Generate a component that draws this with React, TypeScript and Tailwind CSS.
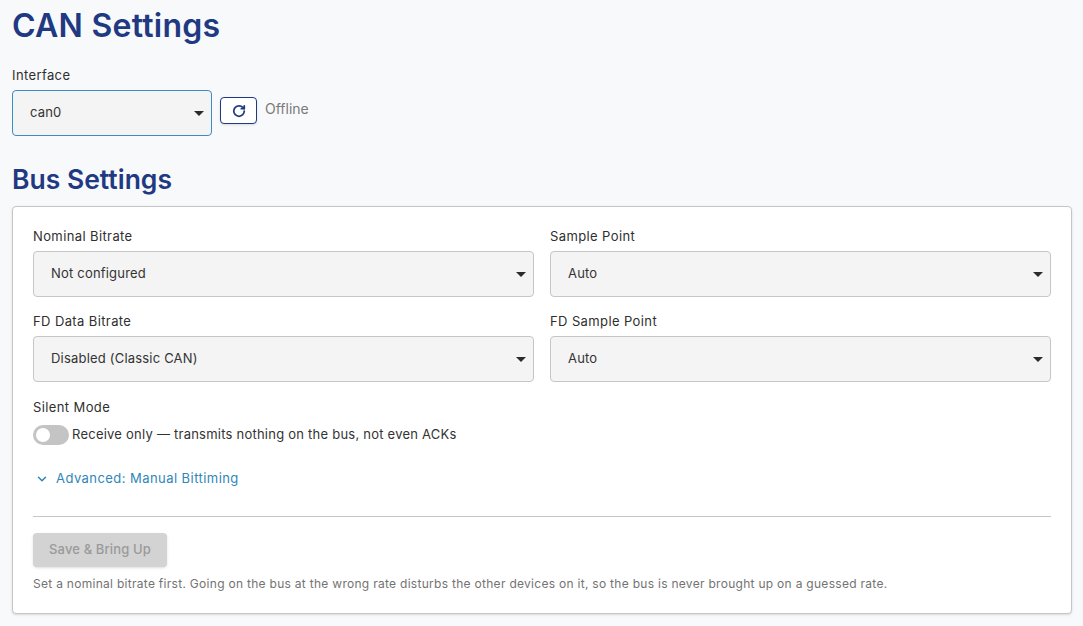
import { ChevronDown, RotateCw } from 'lucide-react';

const FONT = "font-['Inter','Liberation_Sans',sans-serif]";

function SelectBox({ value, className }: { value: string; className: string }) {
  return (
    <div className={`h-[46px] rounded-[4px] bg-[#f4f4f4] border flex items-center justify-between pl-[17px] pr-[7px] ${className}`}>
      <span className="text-[13px] tracking-[0.015em] text-[#333333]">{value}</span>
      <span className="w-0 h-0 border-x-[5px] border-x-transparent border-t-[5px] border-t-[#2b2b2b]" />
    </div>
  );
}

function Field({ label, value }: { label: string; value: string }) {
  return (
    <div className="flex flex-col">
      <label className="h-[16px] mb-[6px] flex items-center text-[13px] font-normal tracking-[0.03em] text-[#2f2f2f]">{label}</label>
      <SelectBox value={value} className="border-[#c6c6c6]" />
    </div>
  );
}

export default function App() {
  return (
    <div className={`${FONT} min-h-[626px] bg-[#f8f9fb] px-3 pt-[8px] overflow-hidden`}>
      <h1 className="h-[36px] leading-[36px] text-[32px] font-semibold tracking-[0.008em] text-[#1f3a82]">CAN Settings</h1>

      <label className="block mt-[23px] h-[16px] leading-[16px] text-[13px] font-normal tracking-[0.03em] text-[#2f2f2f]">Interface</label>
      <div className="mt-[7px] flex items-start gap-2">
        <SelectBox value="can0" className="w-[200px] border-[#3a8dc0]" />
        <button className="mt-[7px] w-[37px] h-[27px] rounded-[4px] border border-[#1f3a82] bg-white shadow-sm flex items-center justify-center">
          <RotateCw className="w-[14px] h-[14px] text-[#1f3a82]" strokeWidth={3} />
        </button>
        <span className="mt-[10px] text-[14px] leading-[18px] text-[#7a7a7a]">Offline</span>
      </div>

      <h2 className="mt-[27px] h-[32px] leading-[32px] text-[26.5px] font-semibold text-[#1f3a82]">Bus Settings</h2>

      <div className="mt-[11px] w-[1060px] h-[408px] bg-white border border-[#c6c6c6] rounded-[4px] shadow-sm px-5 pt-[22px]">
        <div className="grid grid-cols-[501px_501px] gap-x-4 gap-y-[17px]">
          <Field label="Nominal Bitrate" value="Not configured" />
          <Field label="Sample Point" value="Auto" />
          <Field label="FD Data Bitrate" value="Disabled (Classic CAN)" />
          <Field label="FD Sample Point" value="Auto" />
        </div>

        <div className="mt-[17px] h-[16px] leading-[16px] text-[13px] font-normal tracking-[0.03em] text-[#2f2f2f]">Silent Mode</div>
        <div className="mt-[10px] flex items-center gap-[3px]">
          <div className="w-[36px] h-[20px] rounded-full bg-[#c4c4c4] flex items-center pl-[3px]">
            <span className="w-[14px] h-[14px] rounded-full bg-white" />
          </div>
          <span className="text-[13px] font-normal tracking-[0.018em] text-[#333333]">Receive only — transmits nothing on the bus, not even ACKs</span>
        </div>

        <div className="mt-[25px] h-[18px] flex items-center gap-[7px] pl-[2px] text-[#2f86b8]">
          <ChevronDown className="w-[14px] h-[14px]" strokeWidth={2.5} />
          <span className="text-[13px] font-normal tracking-[0.034em]">Advanced: Manual Bittiming</span>
        </div>

        <hr className="mt-[28px] border-t border-[#c6c6c6]" />

        <button className="mt-[16px] w-[134px] h-[34px] rounded-[4px] bg-[#d3d3d3] shadow-sm text-[13px] font-medium tracking-[0.01em] text-[#9a9a9a]">Save &amp; Bring Up</button>

        <p className="mt-[9px] h-[16px] leading-[16px] text-[12px] tracking-[0.024em] text-[#737373]">
          Set a nominal bitrate first. Going on the bus at the wrong rate disturbs the other devices on it, so the bus is never brought up on a guessed rate.
        </p>
      </div>
    </div>
  );
}
